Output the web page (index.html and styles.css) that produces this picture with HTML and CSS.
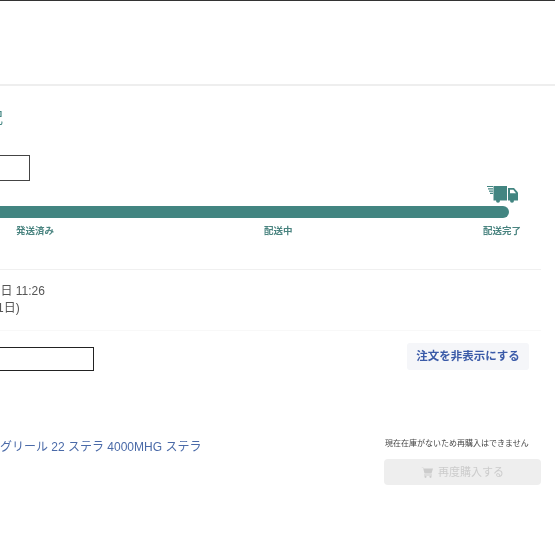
FILE: index.html
```html
<!DOCTYPE html>
<html lang="ja">
<head>
<meta charset="utf-8">
<title>注文履歴</title>
<link rel="stylesheet" href="styles.css">
</head>
<body>
<div class="page">
  <header class="top"></header>
  <main class="main">
    <section class="status">
      <h2 class="title">配送状況</h2>
      <div class="mask mask-short"></div>
      <div class="truck-row">
        <svg class="truck" viewBox="0 0 32 18" width="32" height="18" aria-hidden="true">
          <path d="M0 1.500h6M1 3.800h5M2 6.100h4M3 8.400h3" fill="none" stroke="#428581" stroke-width="1.200"/>
          <path d="M6.500 1h13.500v14.500h-13.500z" fill="#428581"/>
          <path d="M21 3h6l4 4.500v8h-10z" fill="#428581"/>
          <path d="M23 4.800h3.300l2.700 3.400h-6z" fill="#fff"/>
          <circle cx="11" cy="15.800" r="2" fill="#428581"/>
          <circle cx="25" cy="15.800" r="2" fill="#428581"/>
        </svg>
      </div>
      <div class="bar"></div>
      <div class="steps">
        <span class="step">発送済み</span>
        <span class="step">配送中</span>
        <span class="step step-end">配送完了</span>
      </div>
    </section>
    <section class="meta">
      <p class="line line-a">2022年03月21日 11:26</p>
      <p class="line line-b">(お届け予定: 3月31日)</p>
    </section>
    <section class="order">
      <div class="mask mask-long"></div>
      <button class="hide-btn" type="button">注文を非表示にする</button>
    </section>
    <section class="product">
      <a class="link" href="#">スピニングリール 22 ステラ 4000MHG ステラ</a>
      <div class="buy">
        <p class="note">現在在庫がないため再購入はできません</p>
        <button class="buy-btn" type="button" disabled>
          <svg class="cart" viewBox="0 0 12 12" width="12" height="12" aria-hidden="true">
            <path d="M0 1h2l.6 1.500H12l-1.500 5H3.500L2 1.500" fill="#ccc"/>
            <path d="M3 9h8" stroke="#ccc" stroke-width="1"/>
            <circle cx="4.500" cy="10.800" r="1.100" fill="#ccc"/>
            <circle cx="9.500" cy="10.800" r="1.100" fill="#ccc"/>
          </svg>
          再度購入する
        </button>
      </div>
    </section>
  </main>
</div>
</body>
</html>
```
FILE: styles.css
```css
* { box-sizing: border-box; }
html, body { margin: 0; padding: 0; background: #fff; }
body { font-family: "Liberation Sans", "Noto Sans CJK JP", sans-serif; color: #555; }
.page { width: 555px; height: 555px; overflow: hidden; filter: blur(0.35px); }
.top { height: 86px; border-top: 1px solid #333; border-bottom: 2px solid #eeeeee; }
.main { width: 641px; margin-left: -100px; }
.status { padding: 24px 0 0 0; border-bottom: 1px solid #f0f0f0; height: 184px; }
.title { margin: 0 0 0 43px; font-size: 15px; line-height: 16px; font-weight: 400; color: #428581; white-space: nowrap; }
.mask { background: #fff; border: 1px solid #444; }
.mask-short { width: 130px; height: 26px; margin-top: 29px; }
.truck-row { display: flex; justify-content: flex-end; margin-top: 4px; padding-right: 22px; height: 18px; }
.truck { display: block; }
.bar { height: 12px; margin: 3px 32px 0 0; background: #428581; border-radius: 0 6px 6px 0; }
.steps { display: grid; grid-template-columns: 248px auto 1fr; margin: 7px 20px 0 116px; font-size: 9.500px; line-height: 12px; font-weight: 700; color: #4a8480; }
.step-end { text-align: right; }
.meta { padding: 13px 0; border-bottom: 1px solid #f8f8f8; height: 61px; }
.line { margin: 0; font-size: 12px; line-height: 17px; color: #555; white-space: nowrap; }
.line-a { margin-left: 23px; }
.line-b { margin-left: 1px; }
.order { display: flex; justify-content: space-between; align-items: flex-start; padding: 12px 12px 0 0; height: 40px; }
.mask-long { width: 194px; height: 24px; margin-top: 4px; border-color: #222; }
.hide-btn { width: 122px; height: 27px; padding: 0; border: 0; border-radius: 3px; background: #f5f6f9; color: #3a5aa8; font: 700 11.500px/27px "Liberation Sans", "Noto Sans CJK JP", sans-serif; }
.product { display: flex; justify-content: space-between; align-items: flex-start; }
.link { margin: 70px 0 0 0; font-size: 12px; line-height: 12px; color: #4a6aa8; text-decoration: none; white-space: nowrap; padding-left: 52px; }
.buy { width: 157px; margin-top: 67px; }
.note { margin: 0 0 9px 1px; font-size: 8px; line-height: 12px; color: #444; white-space: nowrap; }
.buy-btn { display: flex; align-items: center; justify-content: center; gap: 5px; width: 157px; height: 26px; padding: 0; border: 0; border-radius: 4px; background: #eeeeee; color: #cccccc; font: 400 11px/26px "Liberation Sans", "Noto Sans CJK JP", sans-serif; }
.cart { display: block; }
```
